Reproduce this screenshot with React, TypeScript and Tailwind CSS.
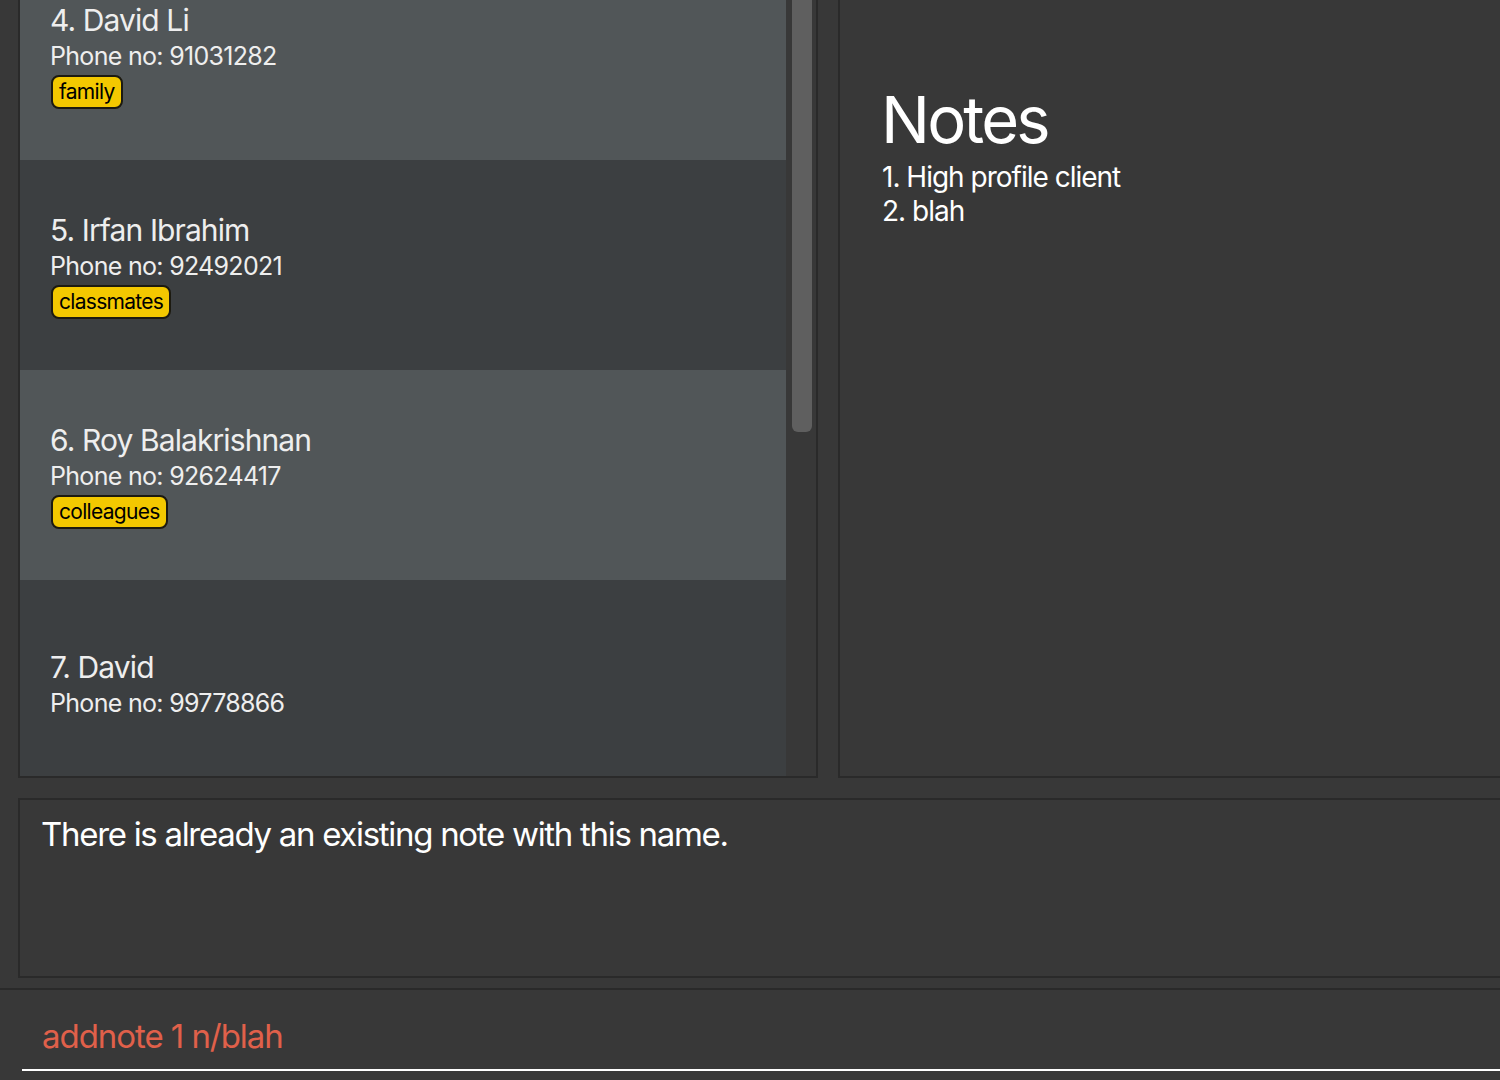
import React from "react";

type Person = {
  index: number;
  name: string;
  phone: string;
  tags: string[];
};

const people: Person[] = [
  { index: 4, name: "David Li", phone: "91031282", tags: ["family"] },
  { index: 5, name: "Irfan Ibrahim", phone: "92492021", tags: ["classmates"] },
  { index: 6, name: "Roy Balakrishnan", phone: "92624417", tags: ["colleagues"] },
  { index: 7, name: "David", phone: "99778866", tags: [] },
];

const notes = ["High profile client", "blah"];

function PersonCard({ person, odd }: { person: Person; odd: boolean }) {
  return (
    <div
      className={`h-[210px] shrink-0 flex flex-col justify-center pl-[31px] ${
        odd ? "bg-[#515658]" : "bg-[#3c3f41]"
      }`}
    >
      <div className="text-[30px] leading-[36px] text-[#eeeeee] tracking-[-0.9px] -ml-[1px]">
        {person.index}. {person.name}
      </div>
      <div className="text-[25px] leading-[36px] text-[#eeeeee] tracking-[-0.7px] -ml-[1px]">
        Phone no: {person.phone}
      </div>
      {person.tags.length > 0 && (
        <div className="flex gap-2 mt-[1px]">
          {person.tags.map(tag => (
            <span
              key={tag}
              className="h-[34px] px-[6px] flex items-center rounded-[8px] border-2 border-[#1c1a10] bg-[#f3c800] text-black text-[21px] tracking-[-0.7px]"
            >
              {tag}
            </span>
          ))}
        </div>
      )}
    </div>
  );
}

export default function App() {
  return (
    <div
      className="w-[1500px] h-[1080px] bg-[#383838] overflow-hidden flex flex-col"
      style={{ fontFamily: "Inter, 'Open Sans', sans-serif" }}
    >
      {/* top area: person list + notes */}
      <div className="h-[778px] shrink-0 flex pl-[18px] gap-[20px]">
        <div className="w-[800px] h-full border-x-2 border-b-2 border-[#2a2a2a] flex overflow-hidden">
          <div className="w-[766px] h-full overflow-hidden">
            <div className="flex flex-col mt-[-50px]">
              {people.map((p, i) => (
                <PersonCard key={p.index} person={p} odd={i % 2 === 0} />
              ))}
            </div>
          </div>
          <div className="w-[30px] h-full pl-[6px] pr-[4px]">
            <div className="h-[432px] w-full bg-[#5f5f5f] rounded-b-[6px]" />
          </div>
        </div>
        <div className="flex-1 h-full border-l-2 border-b-2 border-[#2a2a2a] pl-[41px] pt-[80px] text-white">
          <h1 className="text-[65px] leading-[80px] tracking-[-2.8px]">Notes</h1>
          <ol className="text-[28px] leading-[34px] tracking-[-1px] pl-[1px]">
            {notes.map((n, i) => (
              <li key={i}>
                {i + 1}. {n}
              </li>
            ))}
          </ol>
        </div>
      </div>

      {/* result display */}
      <div className="mt-[20px] ml-[18px] h-[180px] shrink-0 border-l-2 border-y-2 border-[#2a2a2a] pl-[21px] pt-[10px]">
        <p className="text-[33px] leading-[48px] text-white tracking-[-1.3px]">
          There is already an existing note with this name.
        </p>
      </div>

      {/* command box */}
      <div className="mt-[10px] flex-1 border-t-2 border-[#2a2a2a] pl-[22px] pt-[24px]">
        <div className="border-b-2 border-white pl-[20px] h-[57px]">
          <span className="text-[33px] leading-[44px] text-[#e0604a] tracking-[-1.05px]">
            addnote 1 n/blah
          </span>
        </div>
      </div>
    </div>
  );
}
